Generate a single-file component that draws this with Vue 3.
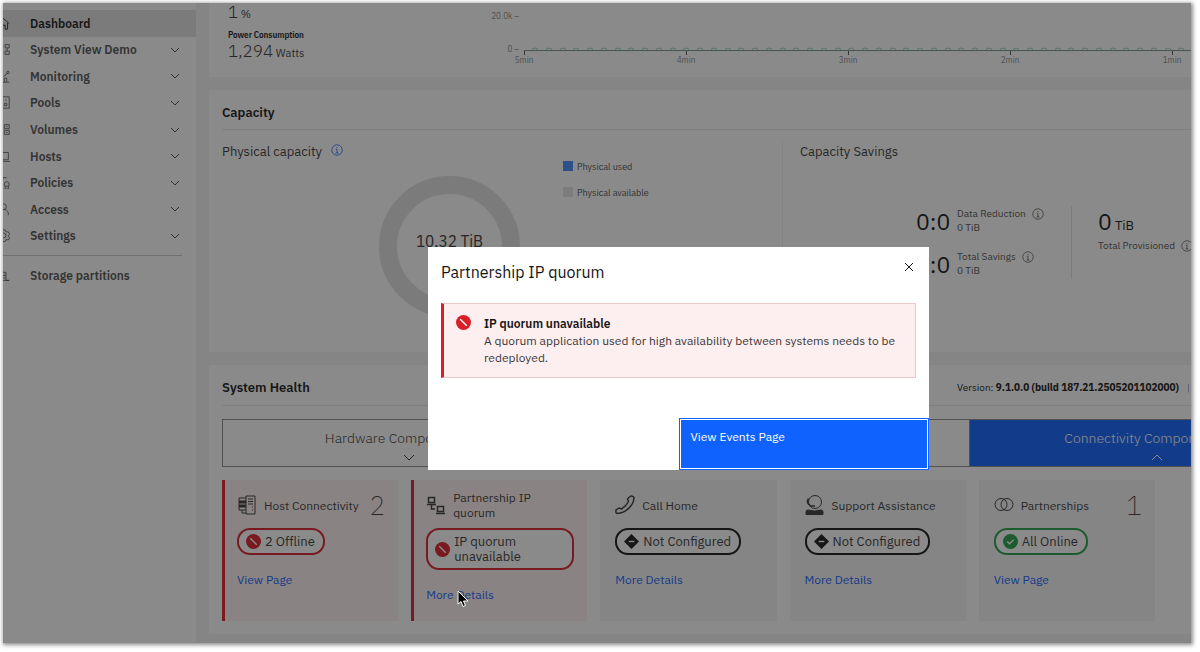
<!-- src/App.vue -->
<template>
  <div class="window">
    <nav class="sidebar" aria-label="Main">
      <ul class="nav-list">
        <li v-for="item in navItems" :key="item.label" :class="{ active: item.active }">
          <a href="#" class="nav-link">
            <svg class="nav-icon" viewBox="0 0 16 16"><path :d="item.icon" /></svg>
            <span>{{ item.label }}</span>
            <svg v-if="!item.active" class="chevron" viewBox="0 0 10 6"><path d="M1 1l4 4 4-4" /></svg>
          </a>
        </li>
      </ul>
      <hr class="nav-divider" />
      <a href="#" class="nav-link">
        <svg class="nav-icon" viewBox="0 0 16 16"><path d="M2 4h9v4H2zM9 6h1M11 8v6h4M6 11h5M6 14h9" /></svg>
        <span>Storage partitions</span>
      </a>
    </nav>

    <main class="main">
      <section class="panel performance">
        <div class="metrics">
          <p class="metric-value">1<small> %</small></p>
          <h4>Power Consumption</h4>
          <p class="metric-value">1,294<small> Watts</small></p>
        </div>
        <svg class="chart" viewBox="0 0 860 74" width="860" height="74">
          <text x="28" y="16" text-anchor="end">20.0k –</text>
          <text x="28" y="49" text-anchor="end">0 –</text>
          <circle v-for="x in points" :key="x" class="point" :cx="x" cy="48" r="3" />
          <path class="cover" d="M33 48h827v4H33z" />
          <path class="line" d="M33 47.5h827" />
          <g v-for="(tick, i) in ticks" :key="tick">
            <path class="tick" :d="`M${33.5 + i * 162} 48v4`" />
            <text :x="33 + i * 162" y="60" text-anchor="middle">{{ tick }}</text>
          </g>
        </svg>
      </section>

      <section class="panel capacity">
        <h2>Capacity</h2>
        <div class="capacity-body">
          <div class="physical">
            <h3>
              Physical capacity
              <svg class="info blue" viewBox="0 0 16 16"><circle cx="8" cy="8" r="7" /><path d="M6.500 7H8v5M6 12h4M8 4v1.500" /></svg>
            </h3>
            <div class="physical-row">
              <div class="donut">
                <span class="donut-value">10.32 TiB</span>
                <span class="donut-label">Physical</span>
              </div>
              <ul class="legend">
                <li><i class="swatch used"></i>Physical used</li>
                <li><i class="swatch"></i>Physical available</li>
              </ul>
            </div>
          </div>
          <div class="savings">
            <h3>Capacity Savings</h3>
            <div class="savings-row">
              <div class="ratios">
                <div v-for="r in ratios" :key="r.label" class="ratio">
                  <span class="big">0:0</span>
                  <div class="ratio-text">
                    <span class="ratio-label">
                      {{ r.label }}
                      <svg class="info" viewBox="0 0 16 16"><circle cx="8" cy="8" r="7" /><path d="M6.500 7H8v5M6 12h4M8 4v1.500" /></svg>
                    </span>
                    <span>{{ r.value }}</span>
                  </div>
                </div>
              </div>
              <div class="provisioned">
                <span class="big">0<small> TiB</small></span>
                <span class="ratio-label">
                  Total Provisioned
                  <svg class="info" viewBox="0 0 16 16"><circle cx="8" cy="8" r="7" /><path d="M6.500 7H8v5M6 12h4M8 4v1.500" /></svg>
                </span>
              </div>
            </div>
          </div>
        </div>
      </section>

      <section class="panel health">
        <header class="health-header">
          <h2>System Health</h2>
          <p>Version: <b>9.1.0.0 (build 187.21.2505201102000)</b><span class="bar">|</span></p>
        </header>
        <div class="tabs">
          <button type="button">
            <span class="tab-label">Hardware Components</span>
            <svg class="tab-chevron" viewBox="0 0 12 7"><path d="M1 1l5 5 5-5" /></svg>
          </button>
          <button type="button" aria-label="Logical">
            <svg class="tab-chevron" viewBox="0 0 12 7"><path d="M1 1l5 5 5-5" /></svg>
          </button>
          <button type="button" class="selected">
            <span class="tab-label">Connectivity Components</span>
            <svg class="tab-chevron" viewBox="0 0 12 7"><path d="M1 6l5-5 5 5" /></svg>
          </button>
        </div>
        <div class="cards">
          <article v-for="card in cards" :key="card.title" class="card" :class="card.status">
            <div class="card-head">
              <svg class="card-icon" viewBox="0 0 20 20">
                <g v-if="card.icon === 'host'">
                  <path d="M9 1h9v18H9zM11 4h5M11 6.500h5M11 9h5M15 12h1M15 15h1M9 3H2v4h7M9 7H2v4h7M9 11H2v4h7M5 15v3h4" />
                  <path class="thick" d="M2 7h7M2 11h7" />
                </g>
                <path v-else-if="card.icon === 'quorum'" class="medium" d="M2.500 2.500h6v5h-6zM1 9.500h9M11.500 11.500h6v5h-6zM10 18.500h9M5.500 10v4H9" />
                <path v-else-if="card.icon === 'phone'" class="medium" d="M2 18.500C.8 18.500.8 16.500 1 15l3-2 2.500 1c3-1.700 5.500-4.500 7-7.500L12.500 4l2.500-2.500c1.300-.7 3-.2 4 1C19 10 11 18 2 18.500z" />
                <g v-else-if="card.icon === 'support'">
                  <circle cx="10" cy="7" r="6.500" />
                  <path class="medium" d="M3.500 3.500C1.500 6.500 2.500 9.500 6 11h4" />
                  <path class="solid" d="M1 19.500v-2.500q0-2 2-2 6.500 2 13 0 2 0 2 2v2.500z" />
                </g>
                <g v-else>
                  <circle cx="7" cy="9.500" r="6" />
                  <circle cx="13" cy="9.500" r="6" />
                </g>
              </svg>
              <h4>{{ card.title }}</h4>
              <span v-if="card.count" class="count">{{ card.count }}</span>
            </div>
            <div class="pill">
              <svg class="status-icon" viewBox="0 0 16 16">
                <path v-if="card.status === 'none'" d="M8 0l8 8-8 8-8-8z" />
                <circle v-else cx="8" cy="8" r="8" />
                <path class="mark" :d="marks[card.status]" />
              </svg>
              <span>{{ card.text }}</span>
            </div>
            <a href="#">{{ card.link }}</a>
          </article>
        </div>
      </section>
    </main>

    <div v-if="open" class="overlay">
      <div class="modal" role="dialog" aria-labelledby="modal-title">
        <header class="modal-header">
          <h2 id="modal-title">Partnership IP quorum</h2>
          <button type="button" class="close" aria-label="Close" @click="open = false">
            <svg viewBox="0 0 10 10"><path d="M1 1l8 8M9 1L1 9" /></svg>
          </button>
        </header>
        <div class="notification">
          <svg class="status-icon" viewBox="0 0 16 16">
            <circle cx="8" cy="8" r="8" />
            <path class="mark" :d="marks.error" />
          </svg>
          <div>
            <strong>IP quorum unavailable</strong>
            <p>A quorum application used for high availability between systems needs to be redeployed.</p>
          </div>
        </div>
        <footer class="modal-footer">
          <button type="button" class="primary" @click="open = false">View Events Page</button>
        </footer>
      </div>
    </div>

    <svg class="pointer" viewBox="0 0 12 18">
      <path d="M1 1v13l3-2.500 2 5 2.500-1-2-4.500h4.500z" />
    </svg>
  </div>
</template>

<script setup>
import { ref } from 'vue'

const open = ref(true)

const navItems = [
  { label: 'Dashboard', active: true, icon: 'M1 8l7-6 7 6M3 7v8h4v-5h3v5h3V7' },
  { label: 'System View Demo', icon: 'M10 2h5v4h-5zM10 10h5v4h-5zM12.500 6v4M2 2h5v4H2zM2 10h5v4H2z' },
  { label: 'Monitoring', icon: 'M1 15h14M9 15v-5h3v5M3 15v-3h3v3M8 8l5-4M12 3a1.500 1.500 0 1 0 3 0 1.500 1.500 0 1 0-3 0' },
  { label: 'Pools', icon: 'M1 1h14v14H1zM5 5h3M9 9h3v3H9zM10 5h2' },
  { label: 'Volumes', icon: 'M9 2h6v5H9zM9 9h6v5H9zM1 2h5v5H1zM1 9h5v5H1zM11 4.500h2M11 11.500h2' },
  { label: 'Hosts', icon: 'M2 3h12v9H2zM0 14h16' },
  { label: 'Policies', icon: 'M7 5V2h5M12 7a3 3 0 1 1 0 6 3 3 0 1 1 0-6M10 12.500V16h4v-3.500M2 4h4v4H2z' },
  { label: 'Access', icon: 'M8 1a3.500 3.500 0 0 1 0 7M8 8c4 0 6 2 6 7M8 1a3.500 3.500 0 0 0 0 7' },
  { label: 'Settings', icon: 'M6 1h4l1 2.500 3 0 1.500 3-2 2 2 2-1.500 3-3-.5-1 2.500H6M8 5a3 3 0 1 1 0 6 3 3 0 1 1 0-6' },
]

const ticks = ['5min', '4min', '3min', '2min', '1min']
// one sample every 14px along the time axis
const points = Array.from({ length: 60 }, (_, i) => Math.round(44 + i * 13.75))

const ratios = [
  { label: 'Data Reduction', value: '0 TiB' },
  { label: 'Total Savings', value: '0 TiB' },
]

const cards = [
  { title: 'Host Connectivity', icon: 'host', count: 2, status: 'error', text: '2 Offline', link: 'View Page' },
  { title: 'Partnership IP quorum', icon: 'quorum', status: 'error', text: 'IP quorum unavailable', link: 'More Details' },
  { title: 'Call Home', icon: 'phone', status: 'none', text: 'Not Configured', link: 'More Details' },
  { title: 'Support Assistance', icon: 'support', status: 'none', text: 'Not Configured', link: 'More Details' },
  { title: 'Partnerships', icon: 'partners', count: 1, status: 'ok', text: 'All Online', link: 'View Page' },
]

const marks = {
  error: 'M4.500 4.500l7 7',
  none: 'M5 8h6',
  ok: 'M4.500 8l2.500 2.500 4.500-4.500',
}
</script>

<style>
body { margin: 0; background: #fff; }
</style>

<style scoped>
* { box-sizing: border-box; }
h2, h3, h4, p, ul { margin: 0; padding: 0; font-weight: 400; }
ul { list-style: none; }
button { font-family: inherit; }
svg { fill: none; stroke: currentColor; flex: none; }

.window {
  position: relative;
  display: flex;
  margin: 3px 9px 9px 3px;
  overflow: hidden;
  background: #f4f4f4;
  color: #393939;
  font-family: "IBM Plex Sans", "Noto Sans", sans-serif;
  font-size: 12px;
  box-shadow: 1px 1px 4px 1px rgba(0, 0, 0, 0.45);
}

/* sidebar */
.sidebar { width: 193px; flex: none; padding-top: 7px; background: #fff; }
.nav-list { display: flex; flex-direction: column; height: 239px; }
.nav-list li { flex: 1; display: flex; }
.nav-list .active { background: #e0e0e0; }
.nav-link {
  display: flex;
  align-items: center;
  flex: 1;
  padding-right: 16px;
  color: #525252;
  font-weight: 600;
  text-decoration: none;
}
.active .nav-link { color: #161616; }
.nav-icon { width: 13px; height: 13px; margin: 0 20px 0 -6px; }
.chevron { width: 10px; height: 6px; margin-left: auto; }
.nav-divider { margin: 6px 14px 12px 0; border: 0; border-top: 1px solid #c6c6c6; }

/* the dashboard is wider than the window and runs out on the right */
.main { flex: 1; min-width: 0; margin-right: -166px; padding: 0 0 9px 13px; }
.panel { padding: 0 13px; margin-bottom: 13px; background: #fff; }
.panel:last-child { margin-bottom: 0; }
.panel h2 { font-size: 13px; font-weight: 600; line-height: 18px; color: #161616; }
.panel h3 { font-size: 13px; line-height: 20px; }

.performance { display: flex; height: 74px; }
.metrics { width: 269px; flex: none; padding-left: 6px; }
.metric-value { font-size: 17px; font-weight: 300; line-height: 18px; }
.metric-value small { font-size: 11px; font-weight: 400; }
.metrics h4 {
  margin: 6px 0 1px;
  color: #161616;
  font-family: "IBM Plex Sans Condensed", "IBM Plex Sans", "Noto Sans", sans-serif;
  font-size: 9px;
  font-weight: 600;
  line-height: 12px;
}
.chart { overflow: visible; }
.chart text {
  fill: #8d8d8d;
  stroke: none;
  font-family: "IBM Plex Sans Condensed", "IBM Plex Sans", "Noto Sans", sans-serif;
  font-size: 9px;
}
.point { stroke: #9fd4b4; }
.cover { fill: #fff; stroke: none; }
.line { stroke: #759888; }
.tick { stroke: #525252; }

.capacity { height: 262px; }
.capacity h2 { padding: 14px 0 7px; border-bottom: 1px solid #e8e8e8; }
.capacity-body { display: flex; padding-top: 12px; }
.physical { width: 50%; height: 194px; border-right: 1px solid #f0f0f0; }
.savings { width: 50%; padding-left: 17px; }
.info { width: 12px; height: 12px; margin-left: 6px; }
.blue { color: #0f62fe; }
.physical-row { display: flex; padding-left: 157px; }
.donut {
  display: flex;
  flex-direction: column;
  align-items: center;
  width: 141px;
  height: 141px;
  margin-top: 14px;
  padding-top: 36px;
  border: 18px solid #e0e0e0;
  border-radius: 50%;
  font-family: "IBM Plex Sans Condensed", "IBM Plex Sans", "Noto Sans", sans-serif;
  white-space: nowrap;
}
.donut-value { font-size: 17px; line-height: 22px; }
.donut-label { font-size: 12px; line-height: 14px; color: #6f6f6f; }
.legend {
  margin-left: 43px;
  color: #525252;
  font-family: "IBM Plex Sans Condensed", "IBM Plex Sans", "Noto Sans", sans-serif;
  font-size: 10px;
}
.legend li { display: flex; align-items: center; height: 10px; margin: -1px 0 17px; }
.swatch { width: 10px; height: 10px; margin-right: 4px; background: #e0e0e0; }
.swatch.used { background: #4589ff; }

.savings-row { display: flex; padding: 44px 0 0 116px; }
.ratios { width: 156px; height: 73px; border-right: 1px solid #e0e0e0; }
.ratio { display: flex; align-items: center; height: 30px; margin-bottom: 13px; }
.big { width: 41px; font-size: 23px; line-height: 27px; color: #161616; white-space: nowrap; }
.big small { font-size: 13px; }
.ratio-text { font-size: 10px; line-height: 14px; color: #525252; }
.ratio-label { display: flex; align-items: center; font-size: 10px; line-height: 14px; color: #525252; white-space: nowrap; }
.provisioned { padding: 2px 0 0 26px; }
.provisioned .big { display: block; }

/* system health */
.health { padding-bottom: 13px; }
.health-header {
  display: flex;
  justify-content: space-between;
  align-items: center;
  padding: 14px 154px 8px 0;
  border-bottom: 1px solid #e8e8e8;
}
.health-header p { font-size: 10px; line-height: 16px; color: #161616; }
.bar { margin-left: 8px; color: #8d8d8d; }
.tabs { display: flex; margin: 13px 0; border: 1px solid #8d8d8d; }
.tabs button {
  display: flex;
  flex: 1;
  flex-direction: column;
  align-items: center;
  justify-content: flex-end;
  gap: 7px;
  height: 46px;
  padding: 0 0 5px;
  border: 0;
  background: #fff;
  color: #393939;
  font-size: 14px;
  font-weight: 300;
  line-height: 18px;
}
.tabs button + button { border-left: 1px solid #8d8d8d; }
.tabs .selected { background: #0f62fe; color: #fff; }
.tab-label { padding-right: 26px; }
.tab-chevron { width: 12px; height: 7px; }
.cards { display: grid; grid-template-columns: repeat(6, 1fr); gap: 13px; }
.card { height: 141px; padding: 10px 13px 0 15px; background: #f4f4f4; }
.card.error { padding-left: 12px; border-left: 3px solid #da1e28; background: #fff1f1; }
.card-head { display: flex; align-items: center; height: 30px; margin-bottom: 8px; }
.card-head h4 { flex: 1; margin-left: 7px; font-size: 12px; line-height: 15px; }
.card-icon { width: 20px; height: 20px; }
.count { font-size: 26px; font-weight: 200; line-height: 30px; }
.thick { stroke-width: 3; }
.medium { stroke-width: 1.5; }
.solid { fill: currentColor; }
.pill {
  display: inline-flex;
  align-items: center;
  gap: 4px;
  padding: 4px 8px 4px 7px;
  border: 2px solid #161616;
  border-radius: 13px;
  background: #fff;
  font-size: 13px;
  line-height: 15px;
}
.error .pill { border-color: #da1e28; }
.ok .pill { border-color: #24a148; }
.status-icon { width: 15px; height: 15px; fill: #161616; stroke: none; }
.error .status-icon, .notification .status-icon { fill: #da1e28; }
.ok .status-icon { fill: #24a148; }
.mark { fill: none; stroke: #fff; stroke-width: 1.5; }
.card a { display: block; margin-top: 16px; font-size: 12px; line-height: 18px; color: #0f62fe; text-decoration: none; }

/* modal */
.overlay {
  position: absolute;
  inset: 0;
  display: flex;
  align-items: center;
  justify-content: center;
  padding: 71px 0 0 163px;
  background: rgba(22, 22, 22, 0.5);
}
.modal { width: 501px; background: #fff; }
.modal-header { display: flex; justify-content: space-between; padding: 13px 13px 19px; }
.modal-header h2 { font-size: 16px; line-height: 24px; color: #161616; }
.close { width: 14px; height: 14px; padding: 2px; border: 0; background: none; color: #161616; }
.close svg { display: block; width: 10px; height: 10px; }
.notification {
  display: flex;
  gap: 13px;
  margin: 0 13px 40px;
  padding: 11px 8px 11px 12px;
  border: 1px solid #e8c8cb;
  border-left: 3px solid #da1e28;
  background: #fdeef0;
  color: #393939;
  line-height: 17px;
}
.notification strong { font-weight: 600; color: #161616; }
.modal-footer { display: flex; justify-content: flex-end; }
.primary {
  width: 50%;
  height: 52px;
  padding: 10px 11px;
  border: 1px solid #0f62fe;
  background: #0f62fe;
  box-shadow: inset 0 0 0 1px #fff;
  color: #fff;
  font-size: 12px;
  line-height: 16px;
  text-align: left;
  display: flex;
}

.pointer { position: absolute; left: 454px; top: 587px; width: 12px; height: 18px; fill: #000; stroke: #fff; }
</style>
